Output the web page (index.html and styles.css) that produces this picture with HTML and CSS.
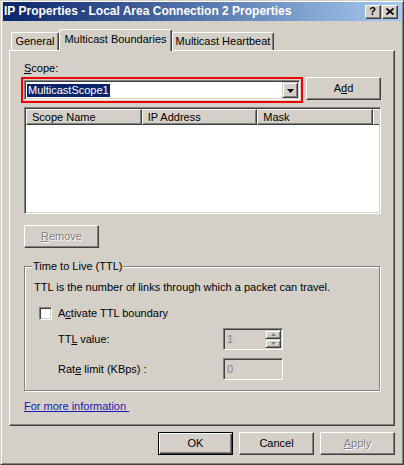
FILE: index.html
```html
<!DOCTYPE html>
<html>
<head>
<meta charset="utf-8">
<title>IP Properties</title>
<link rel="stylesheet" href="styles.css">
</head>
<body>
<div class="window">
  <div class="titlebar">
    <span class="title">IP Properties - Local Area Connection 2 Properties</span>
    <div class="caption-btns">
      <span class="cbtn help">?</span>
      <span class="cbtn close"><svg width="8" height="7" viewBox="0 0 8 7"><path d="M0.5 0.5 L7.5 6.5 M7.5 0.5 L0.5 6.5" stroke="#000" stroke-width="1.7" fill="none"/></svg></span>
    </div>
  </div>
  <div class="body">
    <div class="tabs">
      <div class="tab t1">General</div>
      <div class="tab t2 active">Multicast Boundaries</div>
      <div class="tab t3">Multicast Heartbeat</div>
    </div>
    <div class="panel">
      <div class="label"><u>S</u>cope:</div>
      <div class="scope-row">
        <div class="combo">
          <span class="sel">MulticastScope1</span>
          <span class="dd"><svg width="7" height="4" viewBox="0 0 7 4"><polygon points="0,0 7,0 3.5,4" fill="#000"/></svg></span>
        </div>
        <div class="btn add">A<u>d</u>d</div>
      </div>
      <div class="listview">
        <div class="lv-head">
          <div class="col">Scope Name</div>
          <div class="col">IP Address</div>
          <div class="col">Mask</div>
          <div class="col rest"></div>
        </div>
      </div>
      <div class="btn disabled remove"><u>R</u>emove</div>
      <div class="group">
        <span class="legend">Time to Live (TTL)</span>
        <div class="desc">TTL is the number of links through which a packet can travel.</div>
        <div class="check-row"><span class="checkbox"></span><span class="check-label">A<u>c</u>tivate TTL boundary</span></div>
        <div class="field-row first">
          <span class="flabel">TT<u>L</u> value:</span>
          <div class="edit">
            <span class="val">1</span>
            <div class="spin">
              <span class="sb"><svg width="5" height="3" viewBox="0 0 5 3"><polygon points="2.5,0 5,3 0,3" fill="#808080"/></svg></span>
              <span class="sb"><svg width="5" height="3" viewBox="0 0 5 3"><polygon points="0,0 5,0 2.5,3" fill="#808080"/></svg></span>
            </div>
          </div>
        </div>
        <div class="field-row second">
          <span class="flabel">Rat<u>e</u> limit (KBps) :</span>
          <div class="edit"><span class="val">0</span></div>
        </div>
      </div>
      <div class="link-row"><a class="link">For more information </a></div>
    </div>
    <div class="buttons">
      <div class="btn default">OK</div>
      <div class="btn">Cancel</div>
      <div class="btn disabled"><u>A</u>pply</div>
    </div>
  </div>
</div>
</body>
</html>
```

FILE: styles.css
```css
html, body {
  margin: 0;
  padding: 0;
}

body {
  width: 404px;
  height: 465px;
  overflow: hidden;
  background: #d4d0c8;
  font-family: "Liberation Sans", Arial, sans-serif;
  font-size: 11px;
  line-height: 13px;
  color: #000;
}

u {
  text-decoration: underline;
  text-underline-offset: 1px;
}

.window {
  box-sizing: border-box;
  width: 404px;
  height: 465px;
  background: #d4d0c8;
  border: 1px solid;
  border-color: #d4d0c8 #404040 #404040 #d4d0c8;
  box-shadow: inset 1px 1px 0 #fff, inset -1px -1px 0 #808080;
  padding: 1px 2px 2px 2px;
}

/* Title bar */
.titlebar {
  height: 19px;
  display: flex;
  align-items: center;
  background: linear-gradient(to right, #0a246a, #a6caf0);
  padding: 0 3px 0 1px;
}

.title {
  color: #fff;
  font-weight: bold;
  font-size: 12px;
  flex: 1;
  white-space: nowrap;
}

.caption-btns {
  display: flex;
  gap: 1px;
}

.cbtn {
  box-sizing: border-box;
  width: 16px;
  height: 14px;
  background: #d4d0c8;
  border: 1px solid;
  border-color: #fff #404040 #404040 #fff;
  box-shadow: inset -1px -1px 0 #808080;
  display: flex;
  align-items: center;
  justify-content: center;
}

.help {
  font-weight: bold;
  font-size: 11px;
  line-height: 11px;
  padding-right: 1px;
}

/* Body */
.body {
  padding: 8px 6px 0 6px;
}

.tabs {
  display: flex;
  align-items: flex-end;
  height: 21px;
  padding-left: 2px;
  position: relative;
  z-index: 1;
}

.tab {
  box-sizing: border-box;
  height: 18px;
  padding-top: 2px;
  text-align: center;
  background: #d4d0c8;
  border-top: 1px solid #fff;
  border-left: 1px solid #fff;
  border-right: 1px solid #404040;
  box-shadow: inset -1px 0 0 #808080;
  border-radius: 2px 2px 0 0;
  white-space: nowrap;
}

.t1 { width: 48px; }
.t2 { width: 113px; }
.t3 { width: 102px; }

.tab.active {
  height: 22px;
  margin-bottom: -1px;
  padding-top: 3px;
}

.panel {
  box-sizing: border-box;
  height: 376px;
  border: 1px solid;
  border-color: #fff #404040 #404040 #fff;
  box-shadow: inset -1px -1px 0 #808080;
  padding: 11px 13px 0 14px;
}

.label {
  height: 13px;
}

.scope-row {
  display: flex;
  align-items: flex-end;
  height: 23px;
  margin-top: 2px;
}

.combo {
  box-sizing: border-box;
  flex: 1;
  height: 20px;
  background: #fff;
  border: 1px solid;
  border-color: #808080 #fff #fff #808080;
  box-shadow: inset 1px 1px 0 #404040, inset -1px -1px 0 #d4d0c8;
  outline: 2px solid #ee0000;
  outline-offset: 1px;
  display: flex;
  align-items: center;
  padding: 0 1px 0 2px;
}

.sel {
  flex: none;
  display: inline-block;
  background: #0a246a;
  color: #fff;
  padding: 0 1px;
  line-height: 13px;
}

.dd {
  box-sizing: border-box;
  margin-left: auto;
  width: 16px;
  height: 16px;
  background: #d4d0c8;
  border: 1px solid;
  border-color: #d4d0c8 #404040 #404040 #d4d0c8;
  box-shadow: inset 1px 1px 0 #fff, inset -1px -1px 0 #808080;
  display: flex;
  align-items: center;
  justify-content: center;
  padding-top: 1px;
}

/* Buttons */
.btn {
  box-sizing: border-box;
  width: 75px;
  height: 23px;
  background: #d4d0c8;
  border: 1px solid;
  border-color: #fff #404040 #404040 #fff;
  box-shadow: inset -1px -1px 0 #808080;
  display: flex;
  align-items: center;
  justify-content: center;
}

.btn.add {
  margin-left: 6px;
}

.btn.default {
  border: 1px solid #000;
  box-shadow: inset 1px 1px 0 #fff, inset -1px -1px 0 #404040, inset -2px -2px 0 #808080;
}

.btn.disabled {
  color: #808080;
  text-shadow: 1px 1px 0 #fff;
}

.btn.remove {
  margin-top: 11px;
}

/* List view */
.listview {
  box-sizing: border-box;
  height: 107px;
  margin-top: 7px;
  background: #fff;
  border: 1px solid;
  border-color: #808080 #fff #fff #808080;
  box-shadow: inset 1px 1px 0 #404040, inset -1px -1px 0 #d4d0c8;
  padding: 1px;
}

.lv-head {
  display: flex;
  height: 16px;
}

.col {
  box-sizing: border-box;
  width: 117px;
  height: 16px;
  background: #d4d0c8;
  border: 1px solid;
  border-color: #fff #404040 #404040 #fff;
  box-shadow: inset -1px -1px 0 #808080;
  padding-left: 5px;
  line-height: 14px;
  white-space: nowrap;
}

.col.rest {
  flex: 1;
  width: auto;
  border-right: none;
  box-shadow: none;
}

/* Group box */
.group {
  position: relative;
  box-sizing: border-box;
  width: 356px;
  height: 125px;
  margin-top: 18px;
  border: 1px solid #808080;
  box-shadow: 1px 1px 0 #fff, inset 1px 1px 0 #fff;
  padding: 14px 0 0 9px;
}

.legend {
  position: absolute;
  top: -7px;
  left: 7px;
  padding: 0 1px;
  background: #d4d0c8;
  line-height: 13px;
}

.desc {
  height: 13px;
  white-space: nowrap;
}

.check-row {
  display: flex;
  align-items: center;
  height: 13px;
  margin-top: 13px;
  padding-left: 5px;
}

.checkbox {
  box-sizing: border-box;
  width: 13px;
  height: 13px;
  background: #fff;
  border: 1px solid;
  border-color: #808080 #fff #fff #808080;
  box-shadow: inset 1px 1px 0 #404040, inset -1px -1px 0 #d4d0c8;
  margin-right: 6px;
}

.field-row {
  display: flex;
  align-items: center;
  height: 22px;
  padding-left: 24px;
}

.field-row.first {
  margin-top: 8px;
}

.field-row.second {
  margin-top: 8px;
}

.flabel {
  width: 165px;
}

.edit {
  box-sizing: border-box;
  width: 60px;
  height: 22px;
  border: 1px solid;
  border-color: #808080 #fff #fff #808080;
  box-shadow: inset 1px 1px 0 #404040, inset -1px -1px 0 #d4d0c8;
  display: flex;
  align-items: center;
  padding: 0 1px 0 3px;
}

.val {
  color: #808080;
  flex: 1;
}

.spin {
  display: flex;
  flex-direction: column;
  width: 16px;
  height: 18px;
}

.sb {
  box-sizing: border-box;
  width: 16px;
  height: 9px;
  background: #d4d0c8;
  border: 1px solid;
  border-color: #d4d0c8 #404040 #404040 #d4d0c8;
  box-shadow: inset 1px 1px 0 #fff, inset -1px -1px 0 #808080;
  display: flex;
  align-items: center;
  justify-content: center;
}

.link-row {
  margin-top: 9px;
  height: 13px;
}

.link {
  color: #1a1ab0;
  text-decoration: underline;
  white-space: pre;
}

.buttons {
  display: flex;
  justify-content: flex-end;
  gap: 6px;
  margin-top: 6px;
}
```
